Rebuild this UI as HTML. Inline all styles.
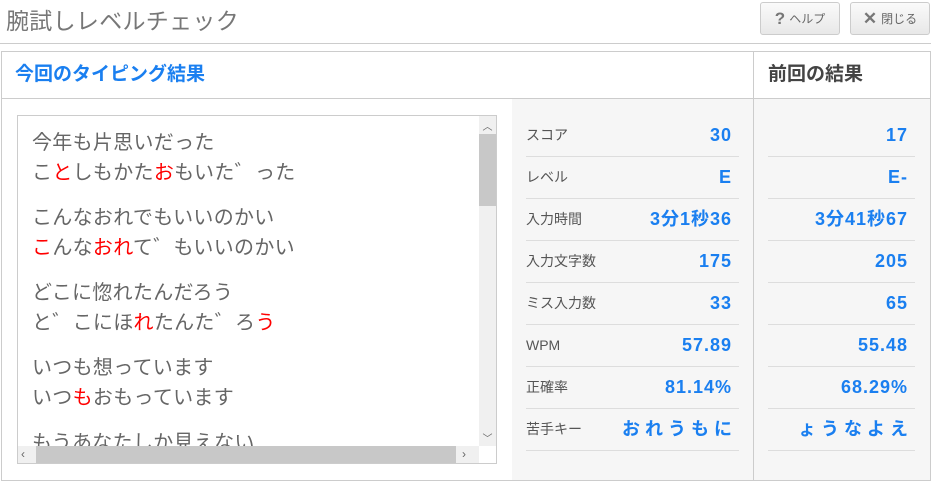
<!DOCTYPE html>
<html><head><meta charset="utf-8"><style>
*{margin:0;padding:0;box-sizing:border-box}
body{width:938px;height:486px;background:#fff;font-family:"Liberation Sans","Noto Sans CJK JP",sans-serif;position:relative;overflow:hidden;color:#555}
.title{position:absolute;left:6px;top:2px;font-size:23px;color:#777;letter-spacing:0.3px}
.btn{position:absolute;top:2px;height:33px;border:1px solid #ccc;border-radius:3px;background:linear-gradient(#fafafa,#e8e8e8);font-size:12px;color:#666;line-height:31px;text-align:center}
.btn b{font-size:17px;color:#777;vertical-align:-1px;margin-right:4px}
.hr{position:absolute;left:0;top:43px;width:931px;height:1px;background:#ccc}
.box{position:absolute;left:1px;top:51px;width:930px;height:430px;border:1px solid #ccc}
.hdr{position:absolute;top:0;height:47px;border-bottom:1px solid #ccc;font-size:19px;font-weight:bold;line-height:45px}
.vd{position:absolute;left:751px;top:0;width:1px;height:428px;background:#ccc}
.gray{position:absolute;top:47px;height:381px;background:#f6f6f6}
.ta{position:absolute;left:15px;top:63px;width:480px;height:349px;border:1px solid #ccc;background:#fff;overflow:hidden}
.ta .t{position:absolute;left:14px;top:12px;font-size:20px;line-height:30px;color:#666;white-space:nowrap;letter-spacing:0.3px}
.ta p{margin-bottom:15px}
.r{color:#f00}
.vs{position:absolute;right:0;top:0;width:17px;height:331px;background:#f0f0f0}
.hs{position:absolute;left:0;bottom:0;width:478px;height:17px;background:#f0f0f0}
.row{position:absolute;height:42px;border-bottom:1px solid #ddd;font-size:14px;line-height:40px}
.row span{position:absolute;right:7px;top:0;color:#1a7ff0;font-weight:bold;font-size:18px;letter-spacing:1px}
</style></head><body>
<div class="title">腕試しレベルチェック</div>
<div class="btn" style="left:760px;width:80px"><b>?</b>ヘルプ</div>
<div class="btn" style="left:850px;width:80px"><b>✕</b>閉じる</div>
<div class="hr"></div>
<div class="box">
 <div class="gray" style="left:510px;width:241px"></div>
 <div class="gray" style="left:752px;width:176px"></div>
 <div class="hdr" style="left:0;width:751px;padding-left:13px;color:#1a7ff0">今回のタイピング結果</div>
 <div class="hdr" style="left:752px;width:176px;padding-left:14px;color:#444">前回の結果</div>
 <div class="vd"></div>
 <div class="ta">
  <div class="t">
   <p>今年も片思いだった<br>こ<span class="r">と</span>しもかた<span class="r">お</span>もいた゛った</p>
   <p>こんなおれでもいいのかい<br><span class="r">こ</span>んな<span class="r">おれ</span>て゛もいいのかい</p>
   <p>どこに惚れたんだろう<br>と゛こにほ<span class="r">れ</span>たんた゛ろ<span class="r">う</span></p>
   <p>いつも想っています<br>いつ<span class="r">も</span>おもっています</p>
   <p>もうあなたしか見えない</p>
  </div>
  <div class="vs"><div style="position:absolute;left:0;top:18px;width:17px;height:72px;background:#c8c8c8"></div>
   <div style="position:absolute;top:2px;width:17px;text-align:center;font-size:10px;color:#666">︿</div>
   <div style="position:absolute;bottom:2px;width:17px;text-align:center;font-size:10px;color:#666">﹀</div></div>
  <div class="hs"><div style="position:absolute;left:18px;top:0;width:420px;height:17px;background:#c8c8c8"></div>
   <div style="position:absolute;left:3px;top:0;font-size:12px;line-height:17px;color:#666">‹</div>
   <div style="position:absolute;left:444px;top:0;font-size:12px;line-height:17px;color:#666">›</div></div>
  <div style="position:absolute;right:0;bottom:0;width:17px;height:17px;background:#fff"></div>
 </div>
 <div class="row" style="left:524px;top:63px;width:213px">スコア<span>30</span></div>
 <div class="row" style="left:524px;top:105px;width:213px">レベル<span>E</span></div>
 <div class="row" style="left:524px;top:147px;width:213px">入力時間<span>3分1秒36</span></div>
 <div class="row" style="left:524px;top:189px;width:213px">入力文字数<span>175</span></div>
 <div class="row" style="left:524px;top:231px;width:213px">ミス入力数<span>33</span></div>
 <div class="row" style="left:524px;top:273px;width:213px">WPM<span>57.89</span></div>
 <div class="row" style="left:524px;top:315px;width:213px">正確率<span>81.14%</span></div>
 <div class="row" style="left:524px;top:357px;width:213px">苦手キー<span style="letter-spacing:5px;right:2px">おれうもに</span></div>
 <div class="row" style="left:766px;top:63px;width:147px"><span>17</span></div>
 <div class="row" style="left:766px;top:105px;width:147px"><span>E-</span></div>
 <div class="row" style="left:766px;top:147px;width:147px"><span>3分41秒67</span></div>
 <div class="row" style="left:766px;top:189px;width:147px"><span>205</span></div>
 <div class="row" style="left:766px;top:231px;width:147px"><span>65</span></div>
 <div class="row" style="left:766px;top:273px;width:147px"><span>55.48</span></div>
 <div class="row" style="left:766px;top:315px;width:147px"><span>68.29%</span></div>
 <div class="row" style="left:766px;top:357px;width:147px"><span style="letter-spacing:5px;right:2px">ょうなよえ</span></div>
</div>
</body></html>
